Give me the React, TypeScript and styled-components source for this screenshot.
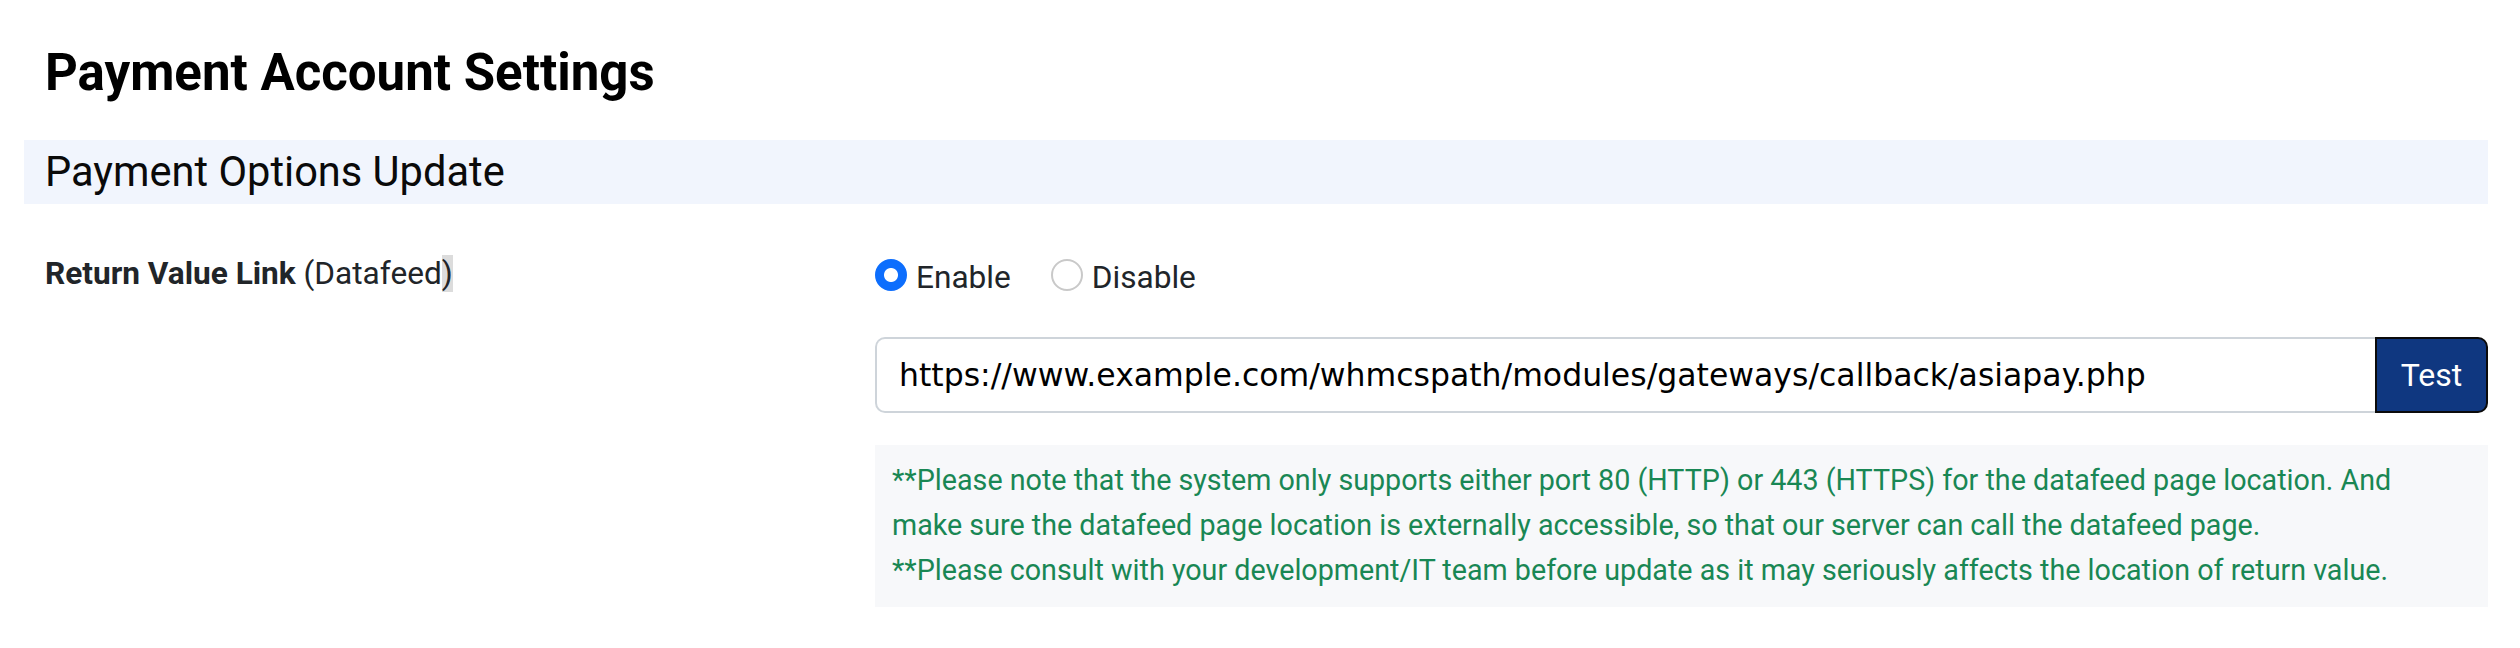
import React from 'react';
import styled, { createGlobalStyle } from 'styled-components';

const GlobalStyle = createGlobalStyle`
  html, body {
    margin: 0;
    padding: 0;
    background: #ffffff;
  }
  body {
    font-family: Roboto, "Liberation Sans", Arial, sans-serif;
    color: #212529;
  }
`;

const Page = styled.div`
  padding: 0 32px 0 24px;
`;

const PageTitle = styled.h1`
  margin: 44px 0 0;
  padding-left: 21px;
  font-size: 51px;
  line-height: 58px;
  font-weight: 700;
  color: #000000;
`;

const SectionBar = styled.div`
  margin-top: 38px;
  height: 64px;
  padding: 0 21px;
  background: #f1f5fd;
  display: flex;
  align-items: center;
`;

const SectionTitle = styled.h2`
  margin: 0;
  font-size: 41.6px;
  line-height: 64px;
  font-weight: 400;
  color: #0a0a0a;
`;

const FormRow = styled.div`
  display: grid;
  grid-template-columns: 830px 1fr;
  margin-top: 46px;
  padding-left: 21px;
`;

const FieldLabel = styled.div`
  font-size: 31.6px;
  line-height: 48px;
  color: #212529;

  strong {
    font-weight: 700;
  }
`;

const Selected = styled.span`
  background: #dcdcdc;
`;

const FieldBody = styled.div`
  display: flex;
  flex-direction: column;
`;

const RadioGroup = styled.div`
  display: flex;
  align-items: flex-start;
  margin-top: 4px;
  height: 48px;
`;

const RadioOption = styled.label`
  display: flex;
  align-items: flex-start;
  gap: 9px;
  margin-right: 40px;
  font-size: 31.6px;
  line-height: 48px;
  color: #212529;
  cursor: pointer;
`;

const RadioDot = styled.span<{ $checked: boolean }>`
  box-sizing: border-box;
  width: 32px;
  height: 32px;
  margin-top: 5px;
  border-radius: 50%;
  flex-shrink: 0;
  background: ${({ $checked }) =>
    $checked ? 'radial-gradient(circle, #ffffff 0 6.5px, #0d6efd 7.5px)' : '#ffffff'};
  border: 2px solid ${({ $checked }) => ($checked ? '#0d6efd' : '#c9c9c9')};
`;

const InputGroup = styled.div`
  display: flex;
  margin-top: 35px;
  height: 76px;
`;

const UrlInput = styled.input`
  box-sizing: border-box;
  flex: 1;
  min-width: 0;
  height: 76px;
  padding: 0 22px;
  border: 2px solid #ced4da;
  border-right: none;
  border-radius: 10px 0 0 10px;
  font-family: "DejaVu Sans", Verdana, sans-serif;
  font-size: 31.5px;
  color: #000000;
  background: #ffffff;
  outline: none;
`;

const TestButton = styled.button`
  box-sizing: border-box;
  width: 113px;
  height: 76px;
  border: 2px solid #0b0b0b;
  border-radius: 0 10px 10px 0;
  background: #0f3780;
  color: #ffffff;
  font-family: Roboto, "Liberation Sans", Arial, sans-serif;
  font-size: 32px;
  padding: 0;
  cursor: pointer;
`;

const NoteBox = styled.div`
  margin-top: 32px;
  padding: 13px 17px 14px;
  background: #f7f8fa;
  color: #198754;
  font-size: 28.7px;
  line-height: 45px;
  white-space: nowrap;
`;

const notes = [
  '**Please note that the system only supports either port 80 (HTTP) or 443 (HTTPS) for the datafeed page location. And',
  'make sure the datafeed page location is externally accessible, so that our server can call the datafeed page.',
  '**Please consult with your development/IT team before update as it may seriously affects the location of return value.',
];

export default function App() {
  const [enabled, setEnabled] = React.useState(true);

  return (
    <>
      <GlobalStyle />
      <Page>
        <PageTitle>Payment Account Settings</PageTitle>
        <SectionBar>
          <SectionTitle>Payment Options Update</SectionTitle>
        </SectionBar>

        <FormRow>
          <FieldLabel>
            <strong>Return Value Link</strong> (Datafeed<Selected>)</Selected>
          </FieldLabel>

          <FieldBody>
            <RadioGroup>
              <RadioOption onClick={() => setEnabled(true)}>
                <RadioDot $checked={enabled} />
                Enable
              </RadioOption>
              <RadioOption onClick={() => setEnabled(false)}>
                <RadioDot $checked={!enabled} />
                Disable
              </RadioOption>
            </RadioGroup>

            <InputGroup>
              <UrlInput
                type="text"
                defaultValue="https://www.example.com/whmcspath/modules/gateways/callback/asiapay.php"
              />
              <TestButton type="button">Test</TestButton>
            </InputGroup>

            <NoteBox>
              {notes.map((line, i) => (
                <div key={i}>{line}</div>
              ))}
            </NoteBox>
          </FieldBody>
        </FormRow>
      </Page>
    </>
  );
}
